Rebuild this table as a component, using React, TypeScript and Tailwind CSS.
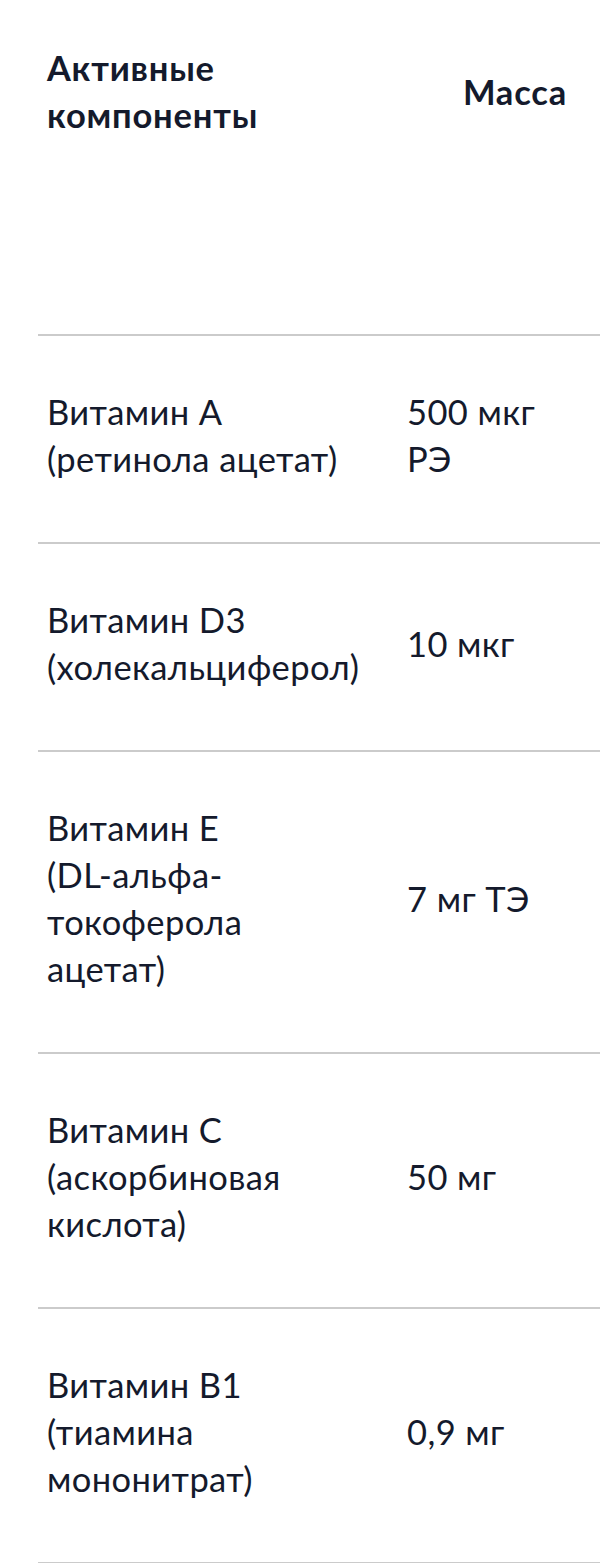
import React from 'react';

const rows: { name: string[]; mass: string[] }[] = [
  { name: ['Витамин А', '(ретинола ацетат)'], mass: ['500 мкг', 'РЭ'] },
  { name: ['Витамин D3', '(холекальциферол)'], mass: ['10 мкг'] },
  { name: ['Витамин E', '(DL-альфа-', 'токоферола', 'ацетат)'], mass: ['7 мг ТЭ'] },
  { name: ['Витамин C', '(аскорбиновая', 'кислота)'], mass: ['50 мг'] },
  { name: ['Витамин B1', '(тиамина', 'мононитрат)'], mass: ['0,9 мг'] },
];

export default function App() {
  return (
    <div className="w-[600px] bg-white text-[#141a2c] font-['Lato',sans-serif] text-[34.5px] leading-[47px] tracking-[0.4px] overflow-hidden">
      <div className="ml-[38px]">
        <div className="flex items-center pt-[44px] pb-[196px] border-b-2 border-[#cbcbcb] font-bold tracking-[0.8px]">
          <div className="w-[369px] pl-[9px]">
            <div>Активные</div>
            <div>компоненты</div>
          </div>
          <div className="w-[160px] text-right">Масса</div>
        </div>
        {rows.map((r) => (
          <div key={r.name[0]} className="flex items-center pt-[52px] pb-[60px] border-b-2 border-[#cbcbcb]">
            <div className="w-[369px] pl-[9px]">
              {r.name.map((l) => (
                <div key={l} className="whitespace-nowrap">{l}</div>
              ))}
            </div>
            <div className="w-[160px]">
              {r.mass.map((l) => (
                <div key={l} className="whitespace-nowrap">{l}</div>
              ))}
            </div>
          </div>
        ))}
      </div>
    </div>
  );
}
